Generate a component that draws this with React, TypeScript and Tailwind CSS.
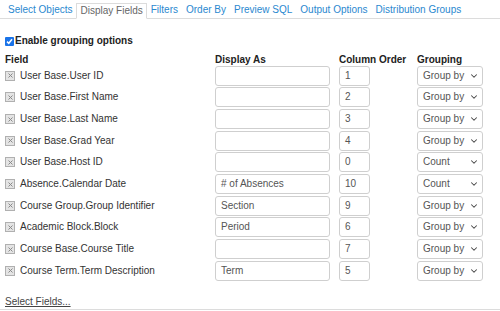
import { ChevronDown } from "lucide-react";

const tabs = [
  "Select Objects",
  "Display Fields",
  "Filters",
  "Order By",
  "Preview SQL",
  "Output Options",
  "Distribution Groups",
];

const rows = [
  { field: "User Base.User ID", as: "", order: "1", group: "Group by" },
  { field: "User Base.First Name", as: "", order: "2", group: "Group by" },
  { field: "User Base.Last Name", as: "", order: "3", group: "Group by" },
  { field: "User Base.Grad Year", as: "", order: "4", group: "Group by" },
  { field: "User Base.Host ID", as: "", order: "0", group: "Count" },
  { field: "Absence.Calendar Date", as: "# of Absences", order: "10", group: "Count" },
  { field: "Course Group.Group Identifier", as: "Section", order: "9", group: "Group by" },
  { field: "Academic Block.Block", as: "Period", order: "6", group: "Group by" },
  { field: "Course Base.Course Title", as: "", order: "7", group: "Group by" },
  { field: "Course Term.Term Description", as: "Term", order: "5", group: "Group by" },
];

function RemoveIcon() {
  return (
    <span className="flex h-[10px] w-[10px] items-center justify-center border border-[#b0b0b0] bg-[#e4e4e4]">
      <svg width="5" height="5" viewBox="0 0 5 5">
        <path d="M0.5 0.5 L4.5 4.5 M4.5 0.5 L0.5 4.5" stroke="#8a8a8a" strokeWidth="1" />
      </svg>
    </span>
  );
}

export default function App() {
  return (
    <div
      className="h-[311px] w-[500px] overflow-hidden bg-white text-[10px] leading-[12px] text-[#333]"
      style={{ fontFamily: '"Liberation Sans", Arial, sans-serif' }}
    >
      <div className="flex h-[310px] flex-col border-b border-[#dcdcdc]">
        <div className="flex h-[19px] items-end border-b border-[#dcdcdc] pl-[4px]">
          {tabs.map((t) => (
            <div
              key={t}
              className={
                t === "Display Fields"
                  ? "-mb-px flex h-[16px] items-center border border-b-white border-[#dcdcdc] bg-white px-[3px] text-[#666]"
                  : "flex h-[16px] items-center px-[4px] text-[#2a88cf]"
              }
            >
              {t}
            </div>
          ))}
        </div>

        <div className="flex flex-col pl-[5px]">
          <label className="mt-[16px] flex items-center gap-[1px] font-bold text-[#222]">
            <span className="flex h-[9px] w-[9px] items-center justify-center rounded-[1px] bg-[#1a73e8]">
              <svg width="7" height="7" viewBox="0 0 7 7">
                <path d="M1 3.6 L2.8 5.3 L6 1.3" fill="none" stroke="white" strokeWidth="1.5" />
              </svg>
            </span>
            Enable grouping options
          </label>

          <div className="mt-[7px] grid h-[11px] grid-cols-[210px_124px_78px_80px] font-bold leading-[11px] text-[#222]">
            <div>Field</div>
            <div>Display As</div>
            <div>Column Order</div>
            <div>Grouping</div>
          </div>

          <div className="flex flex-col">
            {rows.map((r) => (
              <div
                key={r.field}
                className="grid h-[21.67px] grid-cols-[210px_124px_78px_80px] items-center"
              >
                <div className="flex items-center gap-[5px]">
                  <RemoveIcon />
                  <span>{r.field}</span>
                </div>
                <div className="flex h-[20px] w-[115px] items-center rounded-[3px] border border-[#cfcfcf] px-[5px] text-[#555]">
                  {r.as}
                </div>
                <div className="flex h-[20px] w-[31px] items-center rounded-[3px] border border-[#cfcfcf] px-[5px] text-[#555]">
                  {r.order}
                </div>
                <div className="flex h-[20px] w-[66px] items-center justify-between rounded-[3px] border border-[#cfcfcf] pl-[5px] pr-[3px] text-[#555]">
                  <span>{r.group}</span>
                  <ChevronDown size={10} strokeWidth={2.5} className="text-[#444]" />
                </div>
              </div>
            ))}
          </div>

          <div className="mt-[14px]">
            <span className="text-[#444] underline">Select Fields...</span>
          </div>
        </div>
      </div>
    </div>
  );
}
